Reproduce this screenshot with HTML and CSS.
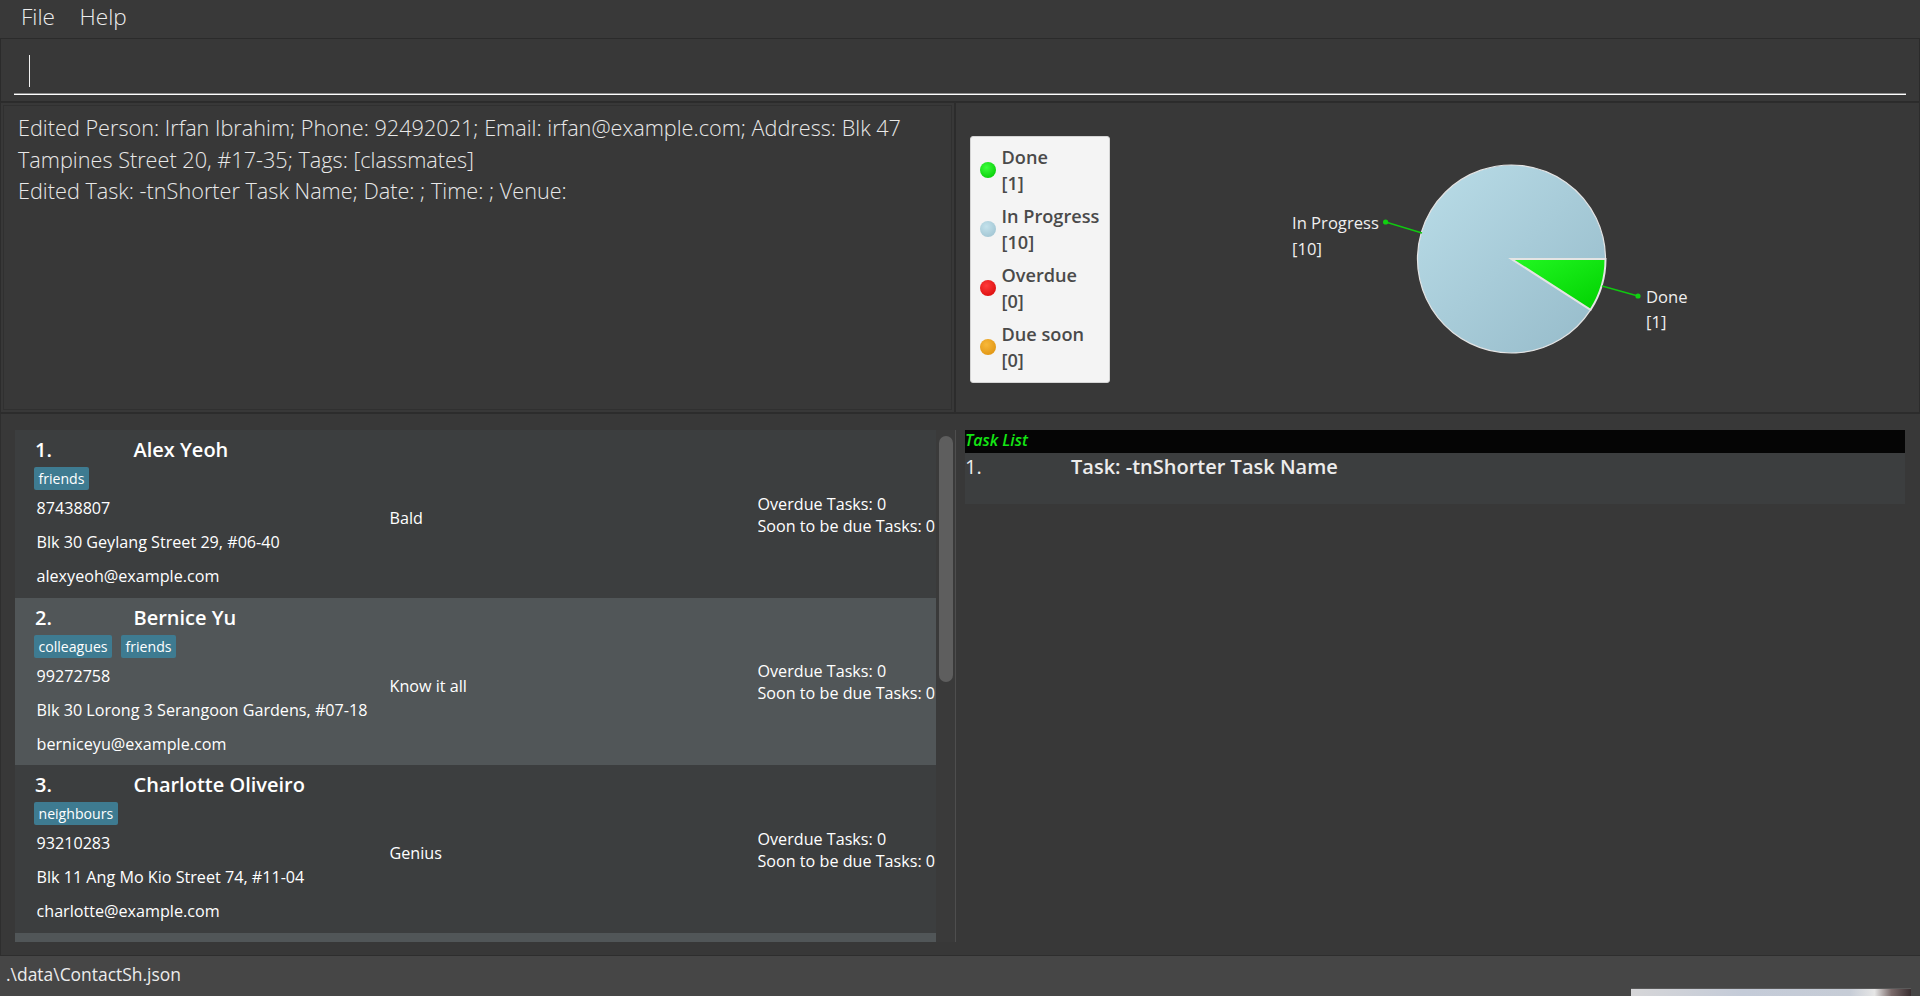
FILE: index.html
```html
<!DOCTYPE html>
<html lang="en">
<head>
<meta charset="utf-8">
<title>ContactSh</title>
<link rel="stylesheet" href="styles.css">
</head>
<body>
<div class="app">
  <div class="menubar">
    <span class="menu">File</span>
    <span class="menu">Help</span>
  </div>

  <div class="commandbox">
    <div class="field"><span class="caret"></span></div>
  </div>

  <div class="top">
    <div class="result">
      <div class="result-text">
        <span class="rline">Edited Person: Irfan Ibrahim; Phone: 92492021; Email: irfan@example.com; Address: Blk 47</span>
        <span class="rline">Tampines Street 20, #17-35; Tags: [classmates]</span>
        <span class="rline">Edited Task: -tnShorter Task Name; Date: ; Time: ; Venue:</span>
      </div>
    </div>

    <div class="chart">
      <div class="legend">
        <div class="legend-item"><span class="dot dot-done"></span><span class="legend-text">Done<br>[1]</span></div>
        <div class="legend-item"><span class="dot dot-progress"></span><span class="legend-text">In Progress<br>[10]</span></div>
        <div class="legend-item"><span class="dot dot-overdue"></span><span class="legend-text">Overdue<br>[0]</span></div>
        <div class="legend-item"><span class="dot dot-soon"></span><span class="legend-text">Due soon<br>[0]</span></div>
      </div>
      <svg class="pie" width="809" height="309" viewBox="0 0 809 309" xmlns="http://www.w3.org/2000/svg">
        <defs>
          <linearGradient id="gBlue" x1="0" y1="0" x2="1" y2="1">
            <stop offset="0" stop-color="#badde8"/>
            <stop offset="1" stop-color="#95bac9"/>
          </linearGradient>
          <linearGradient id="gGreen" x1="0" y1="0" x2="1" y2="1">
            <stop offset="0" stop-color="#22f822"/>
            <stop offset="1" stop-color="#00d000"/>
          </linearGradient>
        </defs>
        <path d="M401.5 156 L480.58 206.82 A94 94 0 1 1 495.5 156 Z" fill="url(#gBlue)" stroke="#e4e4e4" stroke-width="1.2"/>
        <path d="M401.5 156 L495.5 156 A94 94 0 0 1 480.58 206.82 Z" fill="url(#gGreen)" stroke="#e4e4e4" stroke-width="2"/>
        <line x1="312" y1="130" x2="275.6" y2="119" stroke="#10c810" stroke-width="1.4"/>
        <circle cx="275.6" cy="119" r="2.6" fill="#10d010"/>
        <line x1="492" y1="183" x2="528" y2="193" stroke="#10c810" stroke-width="1.4"/>
        <circle cx="528" cy="193" r="2.6" fill="#10d010"/>
        <text class="pie-label" x="182" y="126">In Progress</text>
        <text class="pie-label" x="182" y="151.5">[10]</text>
        <text class="pie-label" x="536" y="200">Done</text>
        <text class="pie-label" x="536" y="225">[1]</text>
      </svg>
    </div>
  </div>

  <div class="lists">
    <div class="person-pane">
      <div class="person-list">
        <div class="card card-even">
          <div class="col-main">
            <div class="card-head"><span class="card-id">1.</span><span class="card-name">Alex Yeoh</span></div>
            <div class="tags"><span class="tag">friends</span></div>
            <div class="card-line">87438807</div>
            <div class="card-line">Blk 30 Geylang Street 29, #06-40</div>
            <div class="card-line">alexyeoh@example.com</div>
          </div>
          <div class="col-remark">Bald</div>
          <div class="col-tasks">
            <div class="task-count">Overdue Tasks: 0</div>
            <div class="task-count">Soon to be due Tasks: 0</div>
          </div>
        </div>

        <div class="card card-odd">
          <div class="col-main">
            <div class="card-head"><span class="card-id">2.</span><span class="card-name">Bernice Yu</span></div>
            <div class="tags"><span class="tag">colleagues</span><span class="tag">friends</span></div>
            <div class="card-line">99272758</div>
            <div class="card-line">Blk 30 Lorong 3 Serangoon Gardens, #07-18</div>
            <div class="card-line">berniceyu@example.com</div>
          </div>
          <div class="col-remark">Know it all</div>
          <div class="col-tasks">
            <div class="task-count">Overdue Tasks: 0</div>
            <div class="task-count">Soon to be due Tasks: 0</div>
          </div>
        </div>

        <div class="card card-even">
          <div class="col-main">
            <div class="card-head"><span class="card-id">3.</span><span class="card-name">Charlotte Oliveiro</span></div>
            <div class="tags"><span class="tag">neighbours</span></div>
            <div class="card-line">93210283</div>
            <div class="card-line">Blk 11 Ang Mo Kio Street 74, #11-04</div>
            <div class="card-line">charlotte@example.com</div>
          </div>
          <div class="col-remark">Genius</div>
          <div class="col-tasks">
            <div class="task-count">Overdue Tasks: 0</div>
            <div class="task-count">Soon to be due Tasks: 0</div>
          </div>
        </div>

        <div class="card card-odd"></div>
      </div>
      <div class="scrollbar"><div class="thumb"></div></div>
    </div>

    <div class="task-pane">
      <div class="task-header">Task List</div>
      <div class="task-cell">
        <span class="task-id">1.</span><span class="task-name">Task: -tnShorter Task Name</span>
      </div>
    </div>
  </div>

  <div class="status">
    <span class="status-text">.\data\ContactSh.json</span>
    <div class="thumbnail"></div>
  </div>
</div>
</body>
</html>
```
FILE: styles.css
```css
* { box-sizing: border-box; }

html, body {
  margin: 0;
  padding: 0;
  background: #383838;
}

body {
  font-family: "Open Sans", "Noto Sans", sans-serif;
  color: #ffffff;
  overflow: hidden;
}

.app {
  width: 1920px;
  height: 996px;
  display: flex;
  flex-direction: column;
  background: #383838;
}

/* ---------- menu bar ---------- */
.menubar {
  height: 38px;
  flex: none;
  display: flex;
  gap: 24.5px;
  padding-left: 21px;
  background: #393939;
}

.menu {
  font-weight: 300;
  font-size: 22.6px;
  line-height: 34.4px;
  color: #ececec;
}

/* ---------- command box ---------- */
.commandbox {
  height: 64px;
  flex: none;
  border: 1px solid #2b2b2b;
  padding: 9px 13px 6px 13px;
  background: #383838;
}

.field {
  height: 47px;
  border-bottom: 1px solid #ffffff;
  box-shadow: inset 0 -1px 0 #8c8c8c;
  padding: 7px 0 0 15px;
}

.caret {
  display: block;
  width: 1px;
  height: 32px;
  background: #f2f2f2;
}

/* ---------- top area ---------- */
.top {
  height: 311px;
  flex: none;
  display: flex;
}

.result {
  width: 955px;
  flex: none;
  border: 1px solid #2c2c2c;
  padding: 2px;
}

.result-text {
  height: 100%;
  border: 1px solid #303030;
  padding: 6px 0 0 14px;
  font-weight: 300;
  font-size: 21.66px;
  line-height: 31.5px;
  color: #e9e9e9;
}

.rline { display: block; white-space: nowrap; }

.chart {
  flex: 1;
  display: flex;
  align-items: flex-start;
  border: 1px solid #2c2c2c;
}

.legend {
  width: 140px;
  flex: none;
  margin: 33px 0 0 14px;
  padding: 7px 0 9px 8.5px;
  background: #f4f4f4;
  border: 1px solid #d4d4d4;
  border-radius: 3px;
  display: flex;
  flex-direction: column;
  gap: 7px;
}

.legend-item {
  display: flex;
  align-items: center;
  gap: 6px;
}

.legend-text {
  font-weight: 600;
  font-size: 18.17px;
  line-height: 26px;
  color: #4a4a4a;
  white-space: nowrap;
}

.dot {
  width: 16px;
  height: 16px;
  border-radius: 50%;
  flex: none;
}
.dot-done { background: radial-gradient(circle at 40% 35%, #3cff3c, #0fd40f 70%); }
.dot-progress { background: radial-gradient(circle at 40% 35%, #c4e2ec, #a6c9d6 70%); }
.dot-overdue { background: radial-gradient(circle at 40% 35%, #ff3a3a, #e01414 70%); }
.dot-soon { background: radial-gradient(circle at 40% 35%, #f8b83a, #e39a18 70%); }

.pie { flex: none; display: block; }

.pie-label {
  font-family: "Open Sans", sans-serif;
  font-size: 16.6px;
  fill: #efefef;
}

/* ---------- lists ---------- */
.lists {
  height: 542px;
  flex: none;
  display: flex;
  border-top: 1px solid #2c2c2c;
}

.person-pane {
  width: 956px;
  flex: none;
  display: flex;
  align-items: flex-start;
  padding: 16px 0 0 14px;
  border-left: 1px solid #2e2e2e;
}

.person-list {
  width: 921px;
  height: 512px;
  overflow: hidden;
  flex: none;
}

.card {
  height: 167.5px;
  display: flex;
  padding: 2px 0 0 20px;
  overflow: hidden;
  white-space: nowrap;
}
.card-even { background: #3c3e3f; }
.card-odd { background: #515658; }

.col-main { width: 354.5px; flex: none; }

.card-head {
  display: flex;
  height: 35px;
  font-weight: 600;
  font-size: 20px;
  line-height: 35px;
  color: #ffffff;
}
.card-id { width: 98.5px; flex: none; }

.tags {
  display: flex;
  gap: 9px;
  height: 23px;
  margin-left: -1px;
}

.tag {
  height: 23px;
  padding: 0 4.5px;
  background: #3e7b91;
  border-radius: 2px;
  font-size: 14.1px;
  line-height: 23px;
  color: #ffffff;
}

.tags + .card-line { margin-top: 1px; }

.card-line {
  padding-left: 1.5px;
  font-size: 16.15px;
  line-height: 34px;
  color: #ffffff;
}

.col-remark {
  width: 368px;
  flex: none;
  padding-top: 69px;
  font-size: 16.15px;
  line-height: 34px;
  color: #ffffff;
}

.col-tasks {
  flex: 1;
  min-width: 0;
  padding-top: 60.5px;
  overflow: hidden;
}

.task-count {
  font-size: 16.15px;
  line-height: 22px;
  color: #ffffff;
}

.scrollbar {
  width: 20px;
  height: 512px;
  flex: none;
  background: #3a3a3a;
  border-right: 1px solid #4e4e4e;
  padding: 6px 0 0 3px;
}

.thumb {
  width: 14px;
  height: 246px;
  border-radius: 7px;
  background: #5e5e5e;
}

.task-pane {
  flex: 1;
  padding: 16px 15px 0 9px;
}

.task-header {
  height: 23px;
  background: #050505;
  font-style: italic;
  font-weight: 600;
  font-size: 16px;
  line-height: 21.3px;
  color: #14e614;
}

.task-cell {
  height: 51px;
  background: #3c3e3f;
  display: flex;
  padding-top: 1.5px;
  font-size: 20px;
  line-height: 24.4px;
  color: #ececec;
}
.task-id { width: 106px; flex: none; }
.task-name { font-weight: 600; }

/* ---------- status bar ---------- */
.status {
  height: 41px;
  flex: none;
  display: flex;
  justify-content: space-between;
  border-top: 1px solid #2e2e2e;
  background: #464646;
  padding: 6px 9px 0 6px;
}

.status-text {
  font-size: 17.44px;
  line-height: 24px;
  color: #ececec;
}

.thumbnail {
  align-self: flex-end;
  width: 280px;
  height: 8px;
  border-top: 1px solid #5a5a5a;
  background: linear-gradient(90deg, #d6d6d8 0%, #c4cbd8 40%, #c6ccd6 78%, #e6e6e6 87%, #7a6a6a 93%, #3a2e30 100%);
}
```
